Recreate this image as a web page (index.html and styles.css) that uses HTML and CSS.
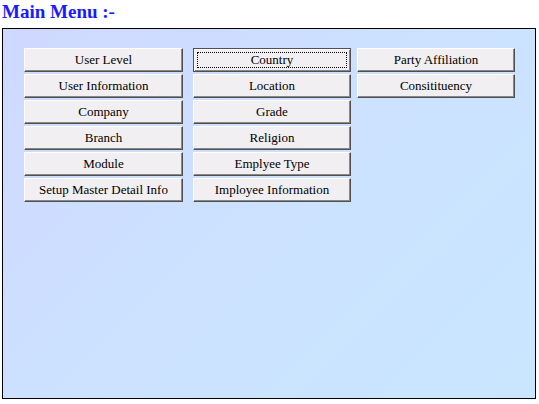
FILE: index.html
```html
<!DOCTYPE html>
<html>
<head>
<meta charset="utf-8">
<link rel="stylesheet" href="styles.css">
</head>
<body>
<h1 class="title">Main Menu :-</h1>
<div class="panel">
  <div class="grid">
    <div class="col col-1">
      <div class="btn">User Level</div>
      <div class="btn">User Information</div>
      <div class="btn">Company</div>
      <div class="btn">Branch</div>
      <div class="btn">Module</div>
      <div class="btn">Setup Master Detail Info</div>
    </div>
    <div class="col col-2">
      <div class="btn focus"><span class="ring">Country</span></div>
      <div class="btn">Location</div>
      <div class="btn">Grade</div>
      <div class="btn">Religion</div>
      <div class="btn">Emplyee Type</div>
      <div class="btn">Imployee Information</div>
    </div>
    <div class="col col-3">
      <div class="btn">Party Affiliation</div>
      <div class="btn">Consitituency</div>
    </div>
  </div>
</div>
</body>
</html>
```
FILE: styles.css
```css
html, body {
  margin: 0;
  padding: 0;
  background: #ffffff;
}
body {
  width: 539px;
  height: 404px;
  overflow: hidden;
  font-family: "Liberation Serif", "Times New Roman", serif;
}
.title {
  margin: 0;
  padding: 2px 0 0 2px;
  height: 25px;
  box-sizing: border-box;
  font-size: 19px;
  line-height: 19px;
  font-weight: bold;
  color: #1a1aff;
}
.panel {
  margin: 3px 0 0 2px;
  width: 534px;
  height: 371px;
  box-sizing: border-box;
  border: 1px solid #000000;
  background: linear-gradient(135deg, #cfd8ff 0%, #cce2ff 50%, #c9e6ff 100%);
  padding: 19px 0 0 21px;
}
.grid {
  display: flex;
  align-items: flex-start;
}
.col {
  display: flex;
  flex-direction: column;
  gap: 2px;
}
.col-1 { width: 169px; }
.col-2 { width: 164px; }
.col-3 { width: 158px; }
.btn {
  display: flex;
  align-items: center;
  justify-content: center;
  height: 24px;
  box-sizing: border-box;
  font-family: "Liberation Serif", "Times New Roman", serif;
  font-size: 13px;
  color: #000000;
  background: #f1eff2;
  border-top: 1px solid #ffffff;
  border-left: 1px solid #ffffff;
  border-right: 1px solid #505050;
  border-bottom: 1px solid #505050;
  box-shadow: inset -1px -1px 0 #888888;
  cursor: default;
}
.col-1 .btn { width: 159px; }
.col-2 .btn, .col-3 .btn { width: 158px; }
.btn.focus {
  border-top-color: #505050;
  border-left-color: #505050;
  box-shadow: inset 1px 1px 0 #ffffff, inset -1px -1px 0 #888888;
  padding: 3px;
}
.ring {
  flex: 1;
  align-self: stretch;
  display: flex;
  align-items: center;
  justify-content: center;
  border: 1px dotted #000000;
}
```
